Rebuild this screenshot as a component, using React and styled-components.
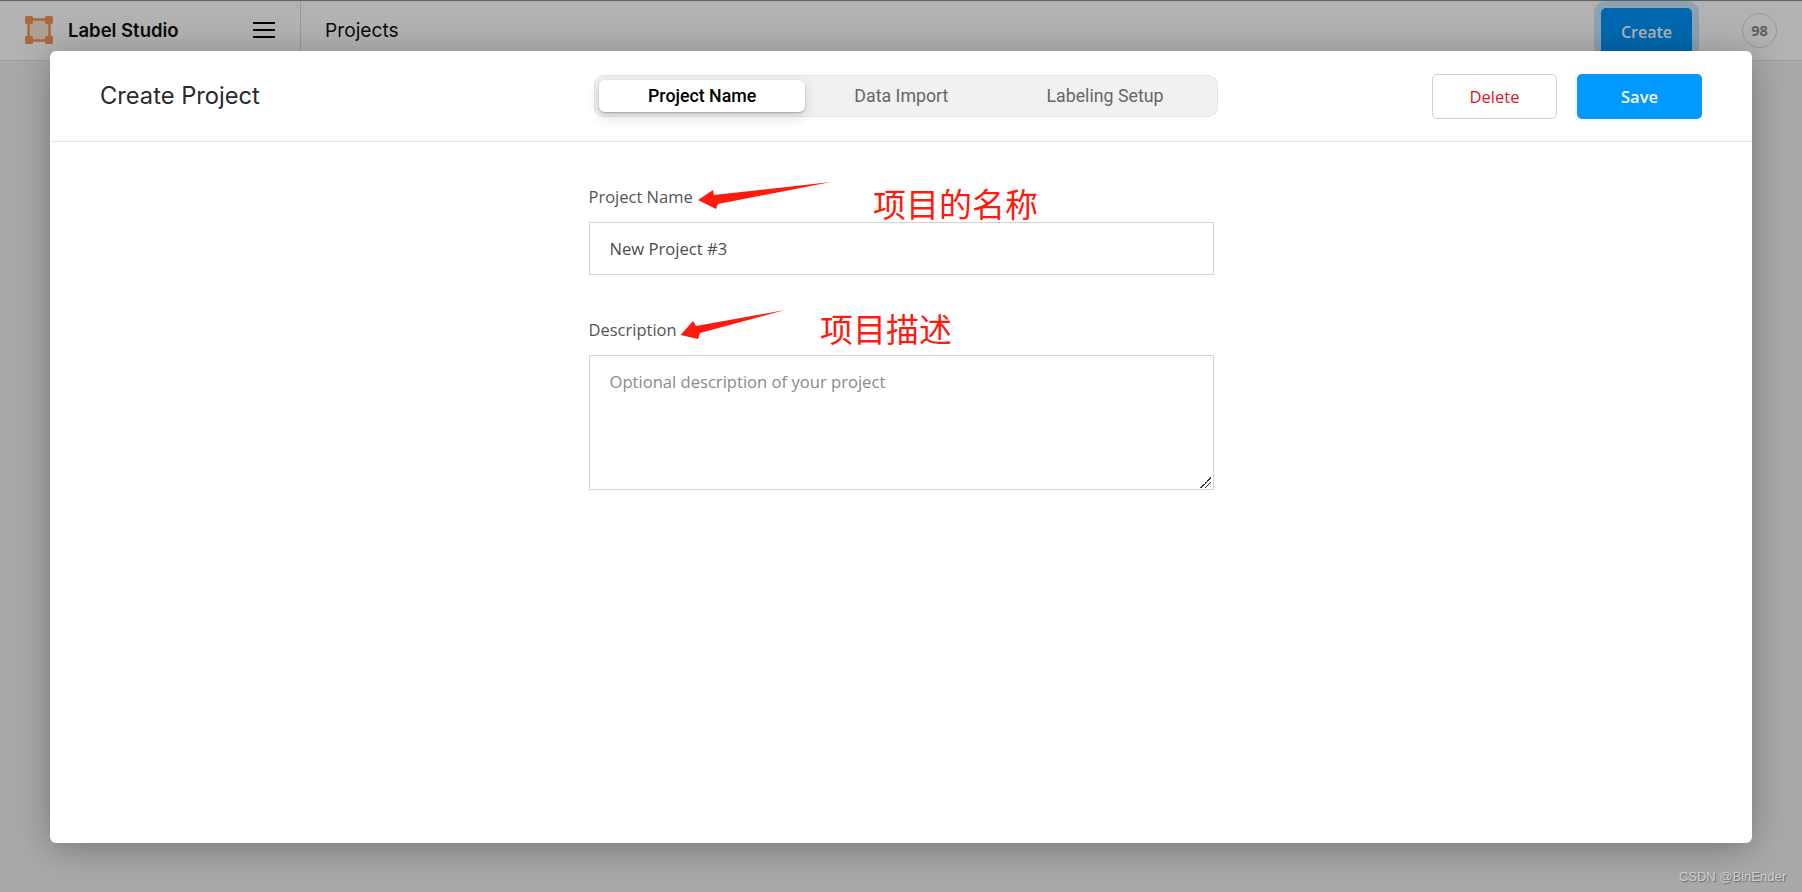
import React from 'react';
import styled, { createGlobalStyle } from 'styled-components';

const GlobalStyle = createGlobalStyle`
  html, body { margin: 0; padding: 0; }
  body { font-family: "Roboto", "Liberation Sans", sans-serif; overflow: hidden; }
`;

const Page = styled.div`
  position: relative;
  width: 1802px;
  height: 892px;
  background: #f3f3f3;
  overflow: hidden;
`;

const TopBar = styled.header`
  display: flex;
  align-items: stretch;
  height: 61px;
  box-sizing: border-box;
  background: #fff;
  border-top: 1px solid #8a8a8a;
  border-bottom: 1px solid #e4e4e4;
`;

const Brand = styled.div`
  display: flex;
  align-items: center;
  width: 301px;
  box-sizing: border-box;
  padding: 0 0 2px 25px;
  border-right: 1px solid #ddd;
`;

const BrandName = styled.span`
  margin-left: 15px;
  width: 185px;
  font-family: "Inter", sans-serif;
  font-size: 18.500px;
  font-weight: 600;
  color: #111;
`;

const Burger = styled.div`
  display: flex;
  flex-direction: column;
  gap: 5px;
  width: 22px;
  span { display: block; height: 2px; background: #000; }
`;

const PageTitle = styled.div`
  display: flex;
  align-items: center;
  padding: 0 0 2px 24px;
  flex: 1;
  font-family: "Inter", sans-serif;
  font-size: 19.200px;
  color: #111;
`;

const TopActions = styled.div`
  display: flex;
  align-items: flex-start;
  padding: 7px 25px 0 0;
`;

const CreateButton = styled.button`
  width: 91px;
  height: 48px;
  border: 0;
  border-radius: 5px;
  background: #0096fc;
  box-shadow: 0 0 0 7px rgba(0, 153, 255, 0.22);
  color: #fff;
  font-family: "Open Sans", sans-serif;
  font-size: 16px;
  font-weight: 600;
`;

const Avatar = styled.div`
  display: flex;
  align-items: center;
  justify-content: center;
  width: 35px;
  height: 35px;
  margin: 5px 0 0 50px;
  box-sizing: border-box;
  border: 1px solid #d8d8d8;
  border-radius: 50%;
  font-family: "Open Sans", sans-serif;
  font-size: 14.500px;
  font-weight: 700;
  color: #888;
`;

const Overlay = styled.div`
  position: absolute;
  inset: 0;
  box-sizing: border-box;
  padding: 51px 50px 49px;
  background: rgba(0, 0, 0, 0.3);
`;

const Modal = styled.section`
  position: relative;
  display: flex;
  flex-direction: column;
  height: 100%;
  background: #fff;
  border-radius: 6px;
  box-shadow: 0 5px 35px rgba(0, 0, 0, 0.3);
`;

const ModalHeader = styled.div`
  display: flex;
  align-items: center;
  height: 91px;
  flex: none;
  box-sizing: border-box;
  padding: 0 50px;
  border-bottom: 1px solid #e4e4e4;
`;

const ModalTitle = styled.h1`
  width: 494px;
  margin: 0 0 2px;
  font-family: "Inter", sans-serif;
  font-size: 23.700px;
  font-weight: 400;
  color: #2a2a2a;
`;

const Tabs = styled.div`
  display: flex;
  height: 42px;
  box-sizing: border-box;
  padding: 4px;
  background: #f1f1f1;
  border: 1px solid #e4e4e4;
  border-radius: 10px;
`;

const Tab = styled.div`
  display: flex;
  align-items: center;
  padding: 0 49px 2px;
  border-radius: 6px;
  font-size: 17.800px;
  font-weight: ${props => props.$active ? 500 : 400};
  color: ${props => props.$active ? '#000' : '#666'};
  background: ${props => props.$active ? '#fff' : 'transparent'};
  box-shadow: ${props => props.$active ? '0 1px 2px rgba(0,0,0,.25), 0 5px 14px rgba(0,0,0,.14)' : 'none'};
`;

const HeaderActions = styled.div`
  display: flex;
  gap: 20px;
  margin-left: auto;
`;

const ActionButton = styled.button`
  width: 125px;
  height: 45px;
  box-sizing: border-box;
  border-radius: 5px;
  border: ${props => props.$primary ? '0' : '1px solid #cfcfcf'};
  background: ${props => props.$primary ? '#0099ff' : '#fff'};
  color: ${props => props.$primary ? '#fff' : '#d9142a'};
  font-family: "Open Sans", sans-serif;
  font-size: 16.500px;
  font-weight: ${props => props.$primary ? 600 : 400};
`;

const Form = styled.form`
  display: flex;
  flex-direction: column;
  width: 625px;
  margin: 0 auto;
  padding-top: 43px;
`;

const Label = styled.label`
  display: block;
  margin-bottom: 13px;
  font-family: "Open Sans", sans-serif;
  font-size: 16.500px;
  line-height: 24px;
  color: #555;
`;

const fieldStyles = `
  display: block;
  width: 100%;
  box-sizing: border-box;
  border: 1px solid #d4d4d4;
  border-radius: 0;
  outline: none;
  font-family: "Open Sans", sans-serif;
  font-size: 16.600px;
  color: #4c4c4c;
  padding: 0 20px;
  &::placeholder { color: #8a8a8a; }
`;

const NameInput = styled.input`
  ${fieldStyles}
  height: 53px;
  margin-bottom: 43px;
`;

const DescriptionInput = styled.textarea`
  ${fieldStyles}
  height: 135px;
  padding-top: 15px;
  line-height: 22px;
  &::-webkit-resizer {
    background: linear-gradient(135deg, transparent 0 50%, #333 50% 57%, transparent 57% 70%, #333 70% 77%, transparent 77%) no-repeat right 2px bottom 1px / 11px 11px;
  }
`;

const Arrow = styled.svg`
  position: absolute;
  left: -50px;
  top: -51px;
  pointer-events: none;
`;

const Note = styled.span`
  position: absolute;
  left: ${props => props.$x}px;
  top: ${props => props.$y}px;
  font-family: "Noto Sans CJK SC", sans-serif;
  font-size: 33px;
  font-weight: 400;
  line-height: 40px;
  color: #ff1a0f;
  white-space: nowrap;
`;

const Watermark = styled.span`
  position: absolute;
  right: 16px;
  bottom: 8px;
  font-family: "Liberation Sans", sans-serif;
  font-size: 13px;
  color: #d0d0d0;
  text-shadow: 1px 1px 1px #666;
`;

const LogoMark = () => (
  <svg width="28" height="28" viewBox="0 0 28 28" fill="none">
    <rect x="3.500" y="3.500" width="21" height="21" fill="#f49756" fillOpacity=".25" stroke="#f49756" strokeWidth="2.500" />
    <rect x="0" y="0" width="8" height="8" rx="1.500" fill="#f49756" />
    <rect x="20" y="0" width="8" height="8" rx="1.500" fill="#f49756" />
    <rect x="0" y="20" width="8" height="8" rx="1.500" fill="#f49756" />
    <rect x="20" y="20" width="8" height="8" rx="1.500" fill="#f49756" />
  </svg>
);

export default function App() {
  return (
    <Page>
      <GlobalStyle />
      <TopBar>
        <Brand>
          <LogoMark />
          <BrandName>Label Studio</BrandName>
          <Burger><span /><span /><span /></Burger>
        </Brand>
        <PageTitle>Projects</PageTitle>
        <TopActions>
          <CreateButton>Create</CreateButton>
          <Avatar>98</Avatar>
        </TopActions>
      </TopBar>

      <Overlay>
        <Modal>
          <ModalHeader>
            <ModalTitle>Create Project</ModalTitle>
            <Tabs>
              <Tab $active>Project Name</Tab>
              <Tab>Data Import</Tab>
              <Tab>Labeling Setup</Tab>
            </Tabs>
            <HeaderActions>
              <ActionButton>Delete</ActionButton>
              <ActionButton $primary>Save</ActionButton>
            </HeaderActions>
          </ModalHeader>
          <Form>
            <Label>Project Name</Label>
            <NameInput defaultValue="New Project #3" />
            <Label>Description</Label>
            <DescriptionInput placeholder="Optional description of your project" />
          </Form>
          <Arrow width="1802" height="892">
            <path d="M698 200 L713 190 L714 195 L831 182 L718 204 L716 209 Z" fill="#ff1a0f" />
            <path d="M680.500 335 L693 321 L696 326 L785 310 L700 333 L698 339 Z" fill="#ff1a0f" />
          </Arrow>
          <Note $x={823} $y={132}>项目的名称</Note>
          <Note $x={770} $y={257}>项目描述</Note>
        </Modal>
      </Overlay>
      <Watermark>CSDN @BinEnder</Watermark>
    </Page>
  );
}
